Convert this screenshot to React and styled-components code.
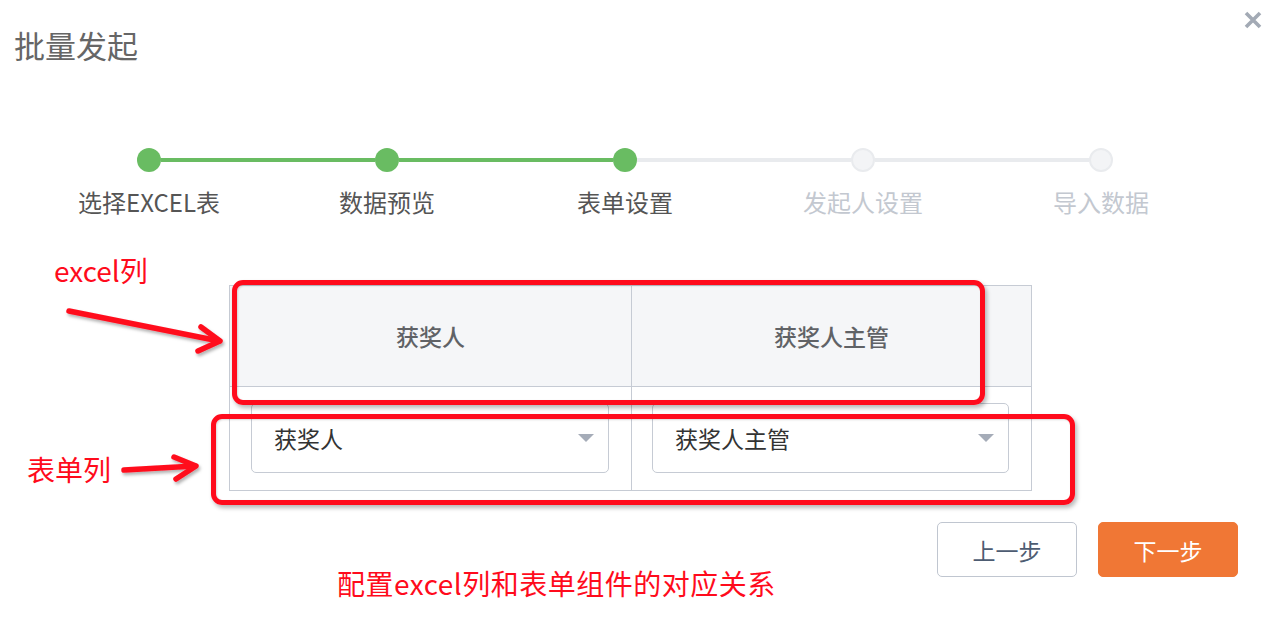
import React from 'react';
import styled, { createGlobalStyle } from 'styled-components';

const GlobalStyle = createGlobalStyle`
  html, body {
    margin: 0;
    padding: 0;
    background: #ffffff;
  }
  body {
    font-family: 'Noto Sans CJK SC', 'Liberation Sans', sans-serif;
  }
  * {
    box-sizing: border-box;
  }
`;

const GREEN = '#69bc62';
const GRAY_LINE = '#e9ebee';
const RED = '#ff0b1c';

const Dialog = styled.div`
  position: relative;
  width: 1274px;
  height: 634px;
  background: #fff;
  overflow: hidden;
`;

const Header = styled.div`
  display: flex;
  justify-content: space-between;
  align-items: flex-start;
  padding: 0 11px 0 14px;
`;

const Title = styled.h1`
  margin: 25px 0 0;
  font-size: 31px;
  line-height: 40px;
  font-weight: 400;
  color: #666;
`;

const Close = styled.button`
  margin-top: 10px;
  width: 20px;
  height: 20px;
  padding: 0;
  border: none;
  background: none;
  cursor: pointer;
`;

const Steps = styled.div`
  display: grid;
  grid-template-columns: repeat(5, 238px);
  margin: 83px 0 0 30px;
`;

const Step = styled.div`
  display: flex;
  flex-direction: column;
  align-items: center;
`;

const Track = styled.div`
  display: flex;
  align-items: center;
  width: 100%;
  height: 24px;
`;

const Segment = styled.div`
  flex: 1;
  height: 4px;
  background: ${(p) => p.$color};
`;

const Dot = styled.div`
  width: 24px;
  height: 24px;
  border-radius: 50%;
  background: ${(p) => (p.$done ? GREEN : '#f3f4f6')};
  border: ${(p) => (p.$done ? 'none' : `2px solid ${GRAY_LINE}`)};
`;

const StepLabel = styled.div`
  margin-top: 14px;
  font-size: 24px;
  line-height: 32px;
  color: ${(p) => (p.$done ? '#555' : '#c3c8d0')};
  white-space: nowrap;
`;

const Table = styled.div`
  display: grid;
  grid-template-columns: 402px 399px;
  width: 803px;
  margin: 67px 0 0 229px;
  border: 1px solid #c6cbd4;
`;

const HeadCell = styled.div`
  display: flex;
  align-items: center;
  justify-content: center;
  height: 101px;
  background: #f5f6f8;
  border-bottom: 1px solid #c6cbd4;
  border-right: ${(p) => (p.$last ? 'none' : '1px solid #c6cbd4')};
  font-size: 23px;
  font-weight: 500;
  color: #606266;
`;

const BodyCell = styled.div`
  padding: 16px 22px 17px ${(p) => (p.$last ? '20px' : '21px')};
  border-right: ${(p) => (p.$last ? 'none' : '1px solid #c6cbd4')};
`;

const Select = styled.div`
  display: flex;
  align-items: center;
  justify-content: space-between;
  height: 70px;
  padding: 0 14px 0 22px;
  border: 1px solid #c6cbd4;
  border-radius: 5px;
  font-size: 23px;
  color: #333;
`;

const Caret = styled.span`
  width: 0;
  height: 0;
  border-left: 8px solid transparent;
  border-right: 8px solid transparent;
  border-top: 8px solid #a5acb8;
  margin-top: -1px;
`;

const Footer = styled.div`
  display: flex;
  justify-content: flex-end;
  gap: 21px;
  margin-top: 31px;
  padding-right: 36px;
`;

const Button = styled.button`
  width: 140px;
  height: 55px;
  border-radius: 5px;
  font-family: inherit;
  font-size: 23px;
  cursor: pointer;
  border: 1px solid ${(p) => (p.$primary ? '#f07735' : '#c0c6d0')};
  background: ${(p) => (p.$primary ? '#f07735' : '#fff')};
  color: ${(p) => (p.$primary ? '#fff' : '#4d5c72')};
`;

/* annotation layer drawn over the dialog */
const Note = styled.div`
  position: absolute;
  left: ${(p) => p.$x}px;
  top: ${(p) => p.$y}px;
  font-size: ${(p) => p.$size}px;
  letter-spacing: ${(p) => p.$spacing || 0}px;
  line-height: 32px;
  color: ${RED};
  white-space: nowrap;
`;

const RedBox = styled.div`
  position: absolute;
  left: ${(p) => p.$x}px;
  top: ${(p) => p.$y}px;
  width: ${(p) => p.$w}px;
  height: ${(p) => p.$h}px;
  border: 5px solid ${RED};
  border-radius: 11px;
  box-shadow: 2px 3px 4px rgba(0, 0, 0, 0.28), inset 1px 1px 2px rgba(0, 0, 0, 0.15);
  pointer-events: none;
`;

const ArrowLayer = styled.svg`
  position: absolute;
  left: 0;
  top: 0;
  pointer-events: none;
`;

const steps = ['选择EXCEL表', '数据预览', '表单设置', '发起人设置', '导入数据'];
const current = 2;
const columns = ['获奖人', '获奖人主管'];

const App = () => {
  return (
    <>
      <GlobalStyle />
      <Dialog>
        <Header>
          <Title>批量发起</Title>
          <Close aria-label="close">
            <svg width="20" height="20" viewBox="0 0 20 20">
              <path d="M3 3 L17 17 M17 3 L3 17" stroke="#a3aab5" strokeWidth="3.6" strokeLinecap="butt" />
            </svg>
          </Close>
        </Header>

        <Steps>
          {steps.map((label, i) => (
            <Step key={label}>
              <Track>
                <Segment $color={i === 0 ? 'transparent' : i <= current ? GREEN : GRAY_LINE} />
                <Dot $done={i <= current} />
                <Segment $color={i === steps.length - 1 ? 'transparent' : i < current ? GREEN : GRAY_LINE} />
              </Track>
              <StepLabel $done={i <= current}>{label}</StepLabel>
            </Step>
          ))}
        </Steps>

        <Table>
          {columns.map((c, i) => (
            <HeadCell key={c} $last={i === columns.length - 1}>{c}</HeadCell>
          ))}
          {columns.map((c, i) => (
            <BodyCell key={c} $last={i === columns.length - 1}>
              <Select>
                {c}
                <Caret />
              </Select>
            </BodyCell>
          ))}
        </Table>

        <Footer>
          <Button>上一步</Button>
          <Button $primary>下一步</Button>
        </Footer>

        <RedBox $x={232} $y={280} $w={753} $h={125} />
        <RedBox $x={211} $y={414} $w={864} $h={91} />

        <ArrowLayer width="1274" height="634">
          <defs>
            <filter id="sh" x="-10%" y="-10%" width="130%" height="150%">
              <feDropShadow dx="1.5" dy="2.5" stdDeviation="1.5" floodColor="#000" floodOpacity="0.3" />
            </filter>
          </defs>
          <g stroke={RED} strokeWidth="5.5" strokeLinecap="round" strokeLinejoin="round" fill="none" filter="url(#sh)">
            <path d="M69 311 L219 341" />
            <path d="M201 327 L220 341 L198 351" />
            <path d="M124 470 L195 466" />
            <path d="M174 457 L196 466 L176 479" />
          </g>
        </ArrowLayer>

        <Note $x={54} $y={254} $size={28}>excel列</Note>
        <Note $x={27} $y={453} $size={28}>表单列</Note>
        <Note $x={337} $y={567} $size={28} $spacing={0.5}>配置excel列和表单组件的对应关系</Note>
      </Dialog>
    </>
  );
};

export default App;
